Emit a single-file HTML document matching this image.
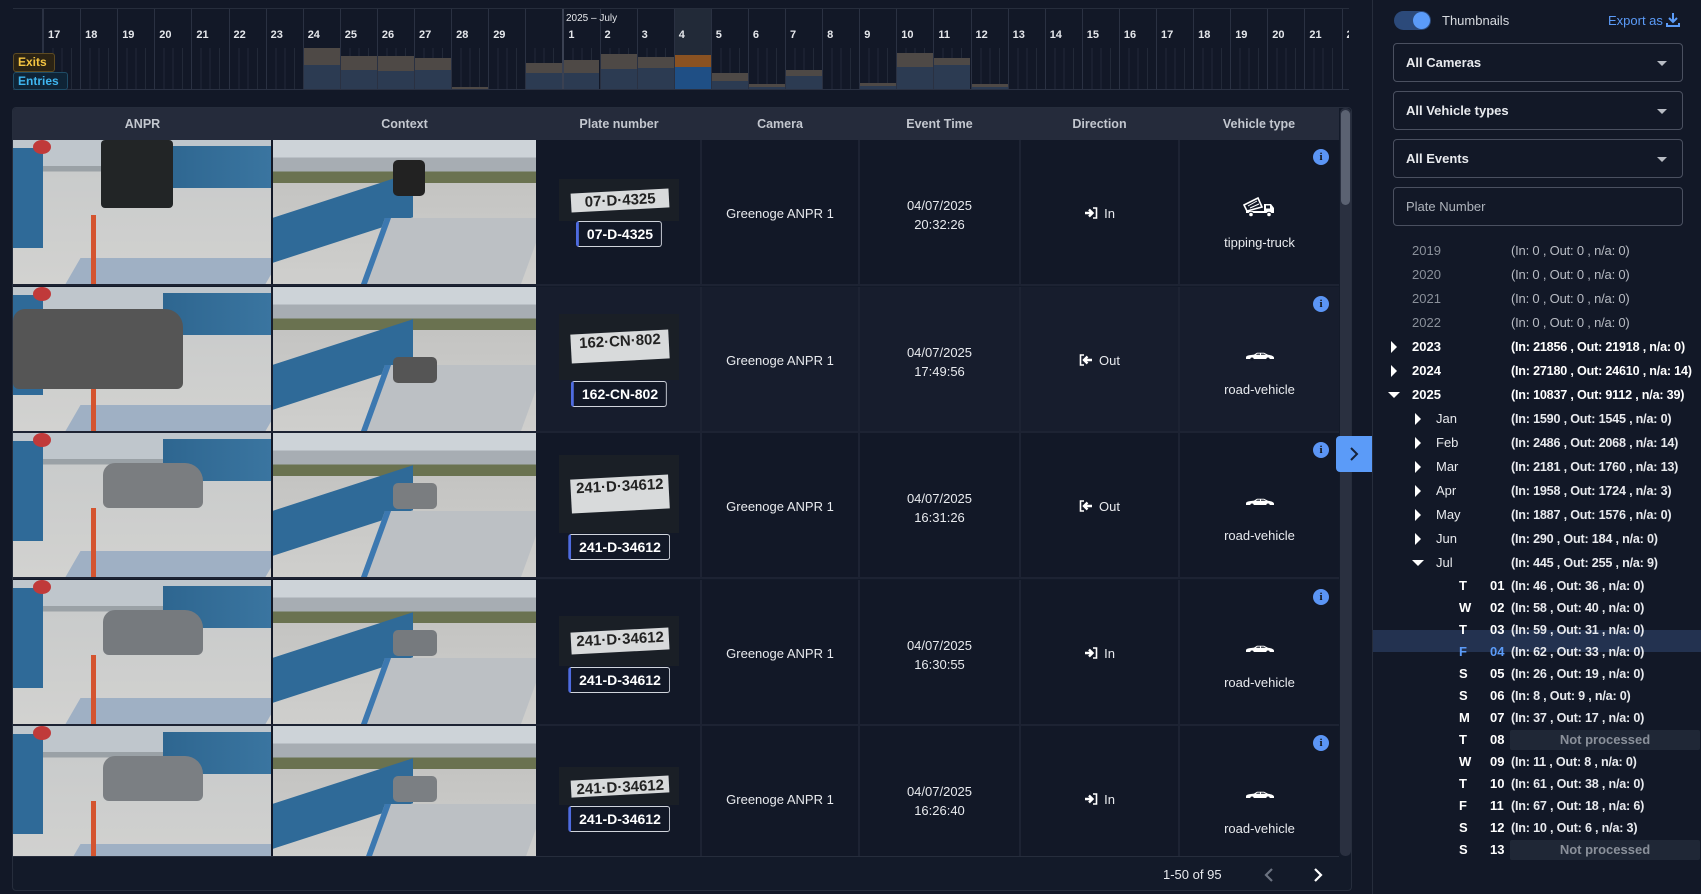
<!DOCTYPE html>
<html><head><meta charset="utf-8">
<style>
*{box-sizing:border-box;margin:0;padding:0}
body{width:1701px;height:894px;overflow:hidden;background:#121827;font-family:"Liberation Sans",sans-serif;color:#e5e7eb;position:relative;font-size:13px}
.abs{position:absolute}
.tl{position:absolute;left:13px;top:8px;width:1336px;height:82px;background:#121827;border-top:1px solid #262d3c;border-bottom:1px solid #2a3142;overflow:hidden}
.col{position:absolute;top:0;height:82px;border-left:1px solid #2a3142}
.col .lb{position:absolute;left:4px;top:20px;font-size:11px;font-weight:bold;color:#e5e7eb}
.col .tk{position:absolute;left:0;right:0;top:39px;bottom:0;background:repeating-linear-gradient(90deg,transparent 0 8.3px,#222938 8.3px 9.3px)}
.ex{position:absolute;left:0;right:0;background:#4e4946}
.en{position:absolute;left:0;right:0;bottom:0;background:#2c3b52}
.tbl{position:absolute;left:12px;top:107px;width:1340px;height:784px;border:1px solid #262d3c;border-radius:4px;overflow:hidden;background:#131a29}
.hd{position:absolute;top:0;height:32px;background:#252b3b;width:1326px;left:0}
.hd div{position:absolute;top:0;height:32px;line-height:32px;text-align:center;font-weight:bold;font-size:12.5px;color:#c3c7cf}
#rows{position:absolute;left:0;top:0;width:1326px;height:748px;overflow:hidden}
.row{position:absolute;left:0;width:1326px;height:146px;border-bottom:2px solid #1d2333;background:#121827}
.cell{position:absolute;top:0;height:144px;border-right:2px solid #1d2333}
.ctr{position:absolute;left:0;right:0;text-align:center;font-size:13px;color:#e8eaee}
.plate{position:absolute;left:50%;transform:translateX(-50%);background:#1a1f26;overflow:hidden}
.plate span{position:absolute;left:10%;right:8%;top:28%;bottom:28%;background:#d8dadb;color:#222;font:bold 15px "Liberation Sans";text-align:center;line-height:1.3;transform:rotate(-3deg)}
.ptxt{position:absolute;left:50%;transform:translateX(-50%);border:1px solid #d0d4dc;border-left:3px solid #4e6be0;border-radius:3px;padding:0 8px;height:26px;line-height:24px;font-weight:bold;font-size:14px;background:#121827;color:#fff;white-space:nowrap}
.info{position:absolute;right:10px;top:9px;width:16px;height:16px;border-radius:50%;background:#5b95f5;color:#111;font:bold 11px "Liberation Serif";text-align:center;line-height:16px}
.anpr{position:absolute;left:0;top:0;width:258px;height:144px;overflow:hidden;background:linear-gradient(180deg,#bfc6cc 0 18%,#9aa1a6 18% 22%,#c9cbcb 22%,#d2d2d0 100%)}
.ctx{position:absolute;left:260px;top:0;width:263px;height:144px;overflow:hidden;background:linear-gradient(180deg,#cdd3d8 0 12%,#a7adb3 12% 22%,#6a7250 22% 30%,#c4c4c2 30%,#cfcfcd 100%)}
.side{position:absolute;left:1372px;top:0;width:329px;height:894px;border-left:1px solid #262d3c;background:#121827}
.dd{position:absolute;left:20px;width:290px;height:39px;border:1px solid #4a5060;border-radius:4px;font-size:13px;font-weight:bold;color:#e8eaee;padding-left:12px;line-height:37px}
.dd i{position:absolute;right:15px;top:17px;border-left:5px solid transparent;border-right:5px solid transparent;border-top:5px solid #b8bcc4}
.tr{position:absolute;font-size:13px;white-space:nowrap;height:22px;line-height:22px}
.tri{position:absolute;width:0;height:0}
.np{position:absolute;left:137px;width:190px;height:20px;background:#1f2736;color:#8a909a;text-align:center;line-height:20px;font-weight:bold;border-radius:2px}
</style></head><body>

<div class="tl" id="tl">
<div class="abs" style="left:0;top:0;width:30px;height:82px;border-right:1px solid #2a3142"></div>
</div>
<div class="abs" style="left:13px;top:53px;width:42px;height:19px;background:#2b2314;border:1px solid #5e4b22;border-radius:3px;color:#f5c542;font-weight:bold;font-size:12px;padding-left:4px;line-height:17px">Exits</div>
<div class="abs" style="left:13px;top:72px;width:55px;height:18px;background:#0f2436;border:1px solid #1f4c66;border-radius:3px;color:#3fb6f0;font-weight:bold;font-size:12px;padding-left:4px;line-height:16px">Entries</div>

<div class="tbl">
<div id="rows"></div>
<div class="hd">
<div style="left:0;width:259px">ANPR</div>
<div style="left:260px;width:263px">Context</div>
<div style="left:525px;width:162px">Plate number</div>
<div style="left:689px;width:156px">Camera</div>
<div style="left:847px;width:159px">Event Time</div>
<div style="left:1008px;width:157px">Direction</div>
<div style="left:1167px;width:158px">Vehicle type</div>
</div>
<div class="abs" style="left:1327px;top:0;width:11px;height:748px;background:#2a3040;border-radius:5px"></div>
<div class="abs" style="left:1328px;top:2px;width:9px;height:95px;background:#5b6272;border-radius:5px"></div>
<div class="abs" style="left:0;top:748px;width:1326px;height:1px;background:#262d3c"></div>
<div class="abs" style="left:1150px;top:757px;font-size:13px;color:#e8eaee;line-height:20px">1-50 of 95</div>
<svg class="abs" style="left:1248px;top:758px" width="16" height="18"><path d="M11 3 L5 9 L11 15" stroke="#6b7280" stroke-width="2.2" fill="none"/></svg>
<svg class="abs" style="left:1297px;top:758px" width="16" height="18"><path d="M5 3 L11 9 L5 15" stroke="#fff" stroke-width="2.2" fill="none"/></svg>
</div>

<div class="abs" style="left:1336px;top:436px;width:36px;height:36px;background:#5b9bf8;border-radius:4px 0 0 4px"></div>
<svg class="abs" style="left:1346px;top:445px" width="16" height="18"><path d="M5 3 L11 9 L5 15" stroke="#16233a" stroke-width="2" fill="none"/></svg>

<div class="side">
<div class="abs" style="left:21px;top:11px;width:37px;height:19px;border-radius:10px;background:#2c4a7a"></div>
<div class="abs" style="left:40px;top:12px;width:17px;height:17px;border-radius:50%;background:#5b9bf8"></div>
<div class="abs" style="left:69px;top:12px;font-size:13px;color:#d8dbe0;line-height:17px">Thumbnails</div>
<div class="abs" style="left:235px;top:12px;font-size:13px;color:#5b9bf8;line-height:17px">Export as</div>
<svg class="abs" style="left:293px;top:12px" width="14" height="16"><path d="M7 1 V10 M3 6 L7 10 L11 6" stroke="#5b9bf8" stroke-width="2" fill="none"/><path d="M1 11 V14 H13 V11" stroke="#5b9bf8" stroke-width="2" fill="none"/></svg>
<div class="dd" style="top:43px">All Cameras<i></i></div>
<div class="dd" style="top:91px">All Vehicle types<i></i></div>
<div class="dd" style="top:139px">All Events<i></i></div>
<div class="dd" style="top:187px;font-weight:normal;color:#aeb3bb">Plate Number</div>
<div id="tree"></div>
</div>

<script>
var tl=document.getElementById('tl');
var days=[17,18,19,20,21,22,23,24,25,26,27,28,29,'',1,2,3,4,5,6,7,8,9,10,11,12,13,14,15,16,17,18,19,20,21,22];
var bars={6:[null,88],7:[47,64],8:[55,69],9:[55,70],10:[57,69],11:[86,88],12:[null,88],13:[62,72],14:[59,72],15:[53,68],16:[56,67],17:[54,66],18:[72,80],19:[83,86],20:[69,75],22:[82,85],23:[52,66],24:[57,64],25:[83,86]};
var h='';
for(var i=0;i<days.length;i++){
 var x=30+37.1*i;
 var bg=i==17?'background:#222a38;':'';
 var bl=i==14?'border-left:2px solid #3a4152;':'';
 h+='<div class="col" style="left:'+x+'px;width:37.1px;'+bg+bl+'">';
 h+='<div class="tk"></div>';
 if(bars[i]){var b=bars[i];var t0=8;
  if(b[0]!==null)h+='<div class="ex" style="top:'+(b[0]-t0)+'px;bottom:0;'+(i==17?'background:#8a5222':'')+'"></div>';
  h+='<div class="en" style="top:'+(b[1]-t0)+'px;'+(i==17?'background:#1f4f85':'')+'"></div>';}
 h+='<div class="lb">'+days[i]+'</div></div>';
}
h+='<div class="abs" style="left:553px;top:3px;font-size:10px;color:#e5e7eb;line-height:14px">2025 – July</div>';
tl.innerHTML+=h;

var R=[
 ['07-D-4325','20:32:26','In','tipping-truck',[39,81],94,'#2b2e2e'],
 ['162-CN-802','17:49:56','Out','road-vehicle',[27,93],107,'#555'],
 ['241-D-34612','16:31:26','Out','road-vehicle',[22,100],114,'#7a7d80'],
 ['241-D-34612','16:30:55','In','road-vehicle',[36,86],100,'#767a7e'],
 ['241-D-34612','16:26:40','In','road-vehicle',[41,79],93,'#7b7f83']];
var inI='<svg width="14" height="12" style="vertical-align:-1px;margin-right:6px"><path d="M1 6 H7 M5 2.5 L8.5 6 L5 9.5" stroke="#fff" stroke-width="2.4" fill="none"/><path d="M9 1 H12.5 V11 H9" stroke="#fff" stroke-width="1.6" fill="none"/></svg>';
var outI='<svg width="14" height="12" style="vertical-align:-1px;margin-right:6px"><path d="M5 1 H1.5 V11 H5" stroke="#fff" stroke-width="1.6" fill="none"/><path d="M13 6 H6 M8.5 2.5 L5 6 L8.5 9.5" stroke="#fff" stroke-width="2.4" fill="none"/></svg>';
var carI='<svg width="30" height="10" viewBox="0 0 30 10"><path d="M1 6.5 Q1 4.8 4 4.3 L9 3.6 L12 1.8 H19 L23 3.8 Q28.5 4.5 29 6.5 V8 H1 Z" fill="#fff"/><path d="M12.5 2.6 H15 V3.8 H10.8 Z M16 2.6 H18.6 L21 3.8 H16 Z" fill="#121827"/><circle cx="7" cy="8.2" r="1.7" fill="#121827"/><circle cx="23" cy="8.2" r="1.7" fill="#121827"/></svg>';
var trkI='<svg width="36" height="24" viewBox="0 0 36 24"><path d="M2 10 L16 3 L20 12 L5 16 Z" fill="none" stroke="#fff" stroke-width="1.6"/><path d="M6 11 L15 6 M8 13 L17 9" stroke="#fff" stroke-width="1"/><path d="M22 9 H29 L32 13 V18 H4 V16 H22 Z" fill="#fff"/><circle cx="9" cy="19.5" r="2.3" fill="#fff" stroke="#121827"/><circle cx="27" cy="19.5" r="2.3" fill="#fff" stroke="#121827"/><rect x="24" y="10.5" width="4" height="3" fill="#121827"/></svg>';
var rh='';
for(var r=0;r<5;r++){var d=R[r];var ry=32+146.5*r;
 rh+='<div class="row" style="top:'+ry+'px;'+(r==1?'background:#171d2d':'')+'">';
 rh+='<div class="anpr"><div class="abs" style="left:0;top:8px;width:30px;height:100px;background:#2f6a98"></div><div class="abs" style="left:150px;top:6px;width:108px;height:42px;background:linear-gradient(90deg,#2e6690,#3a75a0)"></div><div class="abs" style="left:20px;top:0;width:18px;height:14px;border-radius:50%;background:#c03a3a"></div><div class="abs" style="left:60px;top:118px;width:200px;height:26px;background:#9fb0c4;transform:skewX(-30deg)"></div><div class="abs" style="left:78px;top:75px;width:5px;height:69px;background:#d4542f"></div>';
 rh+=r==0?'<div class="abs" style="left:88px;top:0;width:72px;height:68px;background:#222526;border-radius:4px"></div>':'<div class="abs" style="left:'+(r==1?0:90)+'px;top:'+(r==1?22:30)+'px;width:'+(r==1?170:100)+'px;height:'+(r==1?80:45)+'px;background:'+d[6]+';border-radius:12px 18px 6px 6px"></div>';
 rh+='</div>';
 rh+='<div class="ctx"><div class="abs" style="left:0;top:55px;width:140px;height:45px;background:#2f6a98;transform:skewY(-18deg)"></div><div class="abs" style="left:100px;top:78px;width:160px;height:66px;background:#bcc0c4;border-left:6px solid #3c78b0;transform:skewX(-20deg)"></div><div class="abs" style="left:120px;top:'+(r==0?20:r==1?70:50)+'px;width:'+(r==0?32:44)+'px;height:'+(r==0?36:26)+'px;background:'+(r==0?'#222':d[6])+';border-radius:5px"></div></div>';
 rh+='<div class="cell" style="left:525px;width:164px">';
 rh+='<div class="plate" style="top:'+d[4][0]+'px;width:120px;height:'+(d[4][1]-d[4][0])+'px"><span>'+d[0].replace(/-/g,'·')+'</span></div>';
 rh+='<div class="ptxt" style="top:'+(d[5]-13)+'px">'+d[0]+'</div></div>';
 rh+='<div class="cell" style="left:689px;width:158px"><div class="ctr" style="top:66px">Greenoge ANPR 1</div></div>';
 rh+='<div class="cell" style="left:847px;width:161px"><div class="ctr" style="top:56px;line-height:19px">04/07/2025<br>'+d[1]+'</div></div>';
 rh+='<div class="cell" style="left:1008px;width:159px"><div class="ctr" style="top:66px">'+(d[2]=='In'?inI:outI)+d[2]+'</div></div>';
 rh+='<div class="cell" style="left:1167px;width:159px;border-right:none"><div class="info">i</div><div class="ctr" style="top:'+(r==0?55:62)+'px">'+(r==0?trkI:carI)+'</div><div class="ctr" style="top:95px">'+d[3]+'</div></div>';
 rh+='</div>';
}
document.getElementById('rows').innerHTML=rh;

var T='';
function row(y,x,t,cls){T+='<div class="tr" style="top:'+(y-11)+'px;left:'+x+'px;'+(cls||'')+'">'+t+'</div>';}
function triR(y,x){T+='<div class="tri" style="left:'+x+'px;top:'+(y-6)+'px;border-top:6px solid transparent;border-bottom:6px solid transparent;border-left:6px solid #fff"></div>';}
function triD(y,x){T+='<div class="tri" style="left:'+x+'px;top:'+(y-3)+'px;border-left:6px solid transparent;border-right:6px solid transparent;border-top:6px solid #fff"></div>';}
var B='font-weight:bold;font-size:12.6px;letter-spacing:-0.2px;';
var yrs=[['2019','(In: 0 , Out: 0 , n/a: 0)'],['2020','(In: 0 , Out: 0 , n/a: 0)'],['2021','(In: 0 , Out: 0 , n/a: 0)'],['2022','(In: 0 , Out: 0 , n/a: 0)']];
for(var i=0;i<4;i++){var y=251+24*i;row(y,39,yrs[i][0],'color:#8a909a');row(y,138,yrs[i][1],'color:#b8bcc4;letter-spacing:-0.2px');}
var by=[['2023','(In: 21856 , Out: 21918 , n/a: 0)'],['2024','(In: 27180 , Out: 24610 , n/a: 14)'],['2025','(In: 10837 , Out: 9112 , n/a: 39)']];
for(var i=0;i<3;i++){var y=347+24*i;row(y,39,by[i][0],'font-weight:bold;color:#fff');row(y,138,by[i][1],B+'color:#fff');if(i<2)triR(y,18);else triD(y,15);}
var ms=[['Jan','(In: 1590 , Out: 1545 , n/a: 0)'],['Feb','(In: 2486 , Out: 2068 , n/a: 14)'],['Mar','(In: 2181 , Out: 1760 , n/a: 13)'],['Apr','(In: 1958 , Out: 1724 , n/a: 3)'],['May','(In: 1887 , Out: 1576 , n/a: 0)'],['Jun','(In: 290 , Out: 184 , n/a: 0)'],['Jul','(In: 445 , Out: 255 , n/a: 9)']];
for(var i=0;i<7;i++){var y=419+24*i;row(y,63,ms[i][0],'color:#e8eaee');row(y,138,ms[i][1],B+'color:#e8eaee');if(i<6)triR(y,42);else triD(y,39);}
T+='<div class="abs" style="left:0;top:630px;width:329px;height:22px;background:#233250"></div>';
var ds=[['T','01','(In: 46 , Out: 36 , n/a: 0)'],['W','02','(In: 58 , Out: 40 , n/a: 0)'],['T','03','(In: 59 , Out: 31 , n/a: 0)'],['F','04','(In: 62 , Out: 33 , n/a: 0)'],['S','05','(In: 26 , Out: 19 , n/a: 0)'],['S','06','(In: 8 , Out: 9 , n/a: 0)'],['M','07','(In: 37 , Out: 17 , n/a: 0)'],['T','08',''],['W','09','(In: 11 , Out: 8 , n/a: 0)'],['T','10','(In: 61 , Out: 38 , n/a: 0)'],['F','11','(In: 67 , Out: 18 , n/a: 6)'],['S','12','(In: 10 , Out: 6 , n/a: 3)'],['S','13','']];
for(var i=0;i<13;i++){var y=586+22*i;var c=i==3?'color:#5b9bf8':'color:#fff';
 row(y,86,ds[i][0],'font-weight:bold;'+c);row(y,117,ds[i][1],'font-weight:bold;'+c);
 if(ds[i][2])row(y,138,ds[i][2],B+'color:#e8eaee');else T+='<div class="np" style="top:'+(y-10)+'px">Not processed</div>';}
document.getElementById('tree').innerHTML=T;
</script>
</body></html>
